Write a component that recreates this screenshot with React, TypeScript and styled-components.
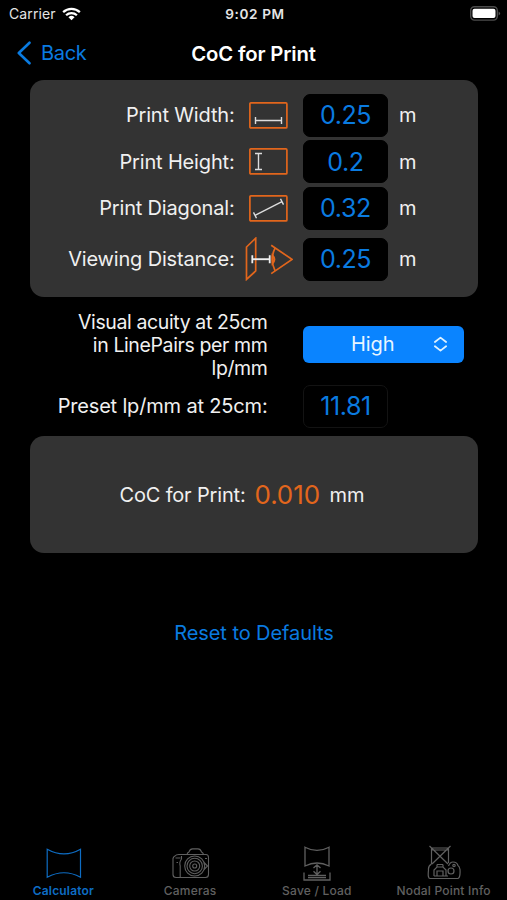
import React from 'react';
import styled, { createGlobalStyle } from 'styled-components';

const GlobalStyle = createGlobalStyle`
  * { box-sizing: border-box; }
  body { margin: 0; background: #000; }
  svg { display: block; flex: none; }
`;

const BLUE = '#0a7be0';
const ORANGE = '#e2661c';

const Screen = styled.main`
  width: 507px;
  height: 900px;
  display: flex;
  flex-direction: column;
  overflow: hidden;
  background: #000;
  color: #f0f0f0;
  font-family: Inter, 'Liberation Sans', sans-serif;
  font-size: 20px;
`;

const StatusBar = styled.header`
  height: 27px;
  display: grid;
  grid-template-columns: 1fr auto 1fr;
  align-items: center;
  padding: 0 6px 0 9px;
  font-size: 14px;
  color: #e4e4e4;
`;

const Carrier = styled.div`
  display: flex;
  align-items: center;
  gap: 6px;
  letter-spacing: 0.1px;
`;

const Clock = styled.div`
  font-weight: 600;
  font-size: 13.6px;
  letter-spacing: 0.6px;
`;

const BatterySlot = styled.div`
  justify-self: end;
`;

const NavBar = styled.nav`
  height: 52px;
  display: grid;
  grid-template-columns: 1fr auto 1fr;
  align-items: center;
  padding: 0 17px;
`;

const BackButton = styled.button`
  justify-self: start;
  display: flex;
  align-items: center;
  gap: 10px;
  padding: 0;
  border: 0;
  background: none;
  color: ${BLUE};
  font: inherit;
  font-size: 20px;
  letter-spacing: -0.3px;
`;

const Title = styled.h1`
  margin: 0;
  font-size: 20.3px;
  font-weight: 600;
  letter-spacing: -0.15px;
  color: #fff;
`;

const Card = styled.section`
  width: 448px;
  margin-left: 30px;
  border-radius: 14px;
  background: #333;
`;

const InputCard = styled(Card)`
  height: 217px;
  margin-top: 0.5px;
  padding-top: 12.6px;
`;

const FieldRow = styled.div<{ $height: number }>`
  height: ${(p) => p.$height}px;
  display: grid;
  grid-template-columns: 204.5px 68.5px 85px 1fr;
  align-items: center;
`;

const Label = styled.label`
  text-align: right;
  white-space: nowrap;
  letter-spacing: -0.17px;
`;

const IconSlot = styled.div`
  display: flex;
  justify-content: center;
`;

const ValueBox = styled.div<{ $outlined?: boolean }>`
  width: 85px;
  height: 43px;
  display: flex;
  align-items: center;
  justify-content: center;
  border-radius: 7px;
  border: 1px solid ${(p) => (p.$outlined ? '#131313' : '#000')};
  background: #000;
  color: ${BLUE};
  font-size: 25px;
  letter-spacing: -0.4px;
`;

const Unit = styled.span`
  padding-left: 11px;
`;

const PresetArea = styled.section`
  height: 139.5px;
  display: grid;
  grid-template-columns: 267.5px 162px;
  column-gap: 35.5px;
  grid-template-rows: 68px 43px;
  row-gap: 6px;
  padding-top: 14px;
`;

const AcuityLabel = styled.div`
  text-align: right;
  line-height: 23.2px;
  font-size: 19.5px;
  letter-spacing: -0.38px;
`;

const Picker = styled.button`
  width: 161px;
  height: 36.5px;
  margin-top: 15.5px;
  padding: 0 16px 0 48px;
  display: flex;
  align-items: center;
  justify-content: space-between;
  border: 0;
  border-radius: 6px;
  background: #0a84ff;
  color: #e8f6ff;
  font: inherit;
  font-size: 20px;
  letter-spacing: -0.1px;
`;

const PresetLabel = styled(Label)`
  align-self: center;
`;

const ResultCard = styled(Card)`
  height: 117px;
  display: flex;
  align-items: center;
  padding-left: 89.5px;
`;

const ResultValue = styled.output`
  margin: 0 9.5px 0 9px;
  color: ${ORANGE};
  font-size: 26px;
  letter-spacing: -0.1px;
`;

const ResetButton = styled.button`
  align-self: center;
  margin: 67px 0 0 1px;
  padding: 0;
  border: 0;
  background: none;
  color: ${BLUE};
  font: inherit;
  line-height: 26px;
  letter-spacing: -0.08px;
`;

const TabBar = styled.footer`
  height: 60px;
  margin-top: auto;
  display: grid;
  grid-template-columns: repeat(4, 1fr);
`;

const Tab = styled.button<{ $active?: boolean }>`
  display: flex;
  flex-direction: column;
  align-items: center;
  padding: 0;
  border: 0;
  background: none;
  color: ${(p) => (p.$active ? '#0e6dc4' : '#606060')};
  font: inherit;
  font-size: 12px;
  font-weight: ${(p) => (p.$active ? 600 : 500)};
  line-height: 16px;
  letter-spacing: 0.2px;
  white-space: nowrap;
`;

const TabIcon = styled.div<{ $lift: number }>`
  height: 43px;
  display: flex;
  align-items: flex-end;
  padding: 0 0 ${(p) => p.$lift}px 1px;
`;

const WifiIcon = () => (
  <svg width="19" height="14" viewBox="0 0 20 14" fill="none" stroke="#fff" strokeWidth="2.4">
    <path d="M1.2 5A13 13 0 0 1 18.8 5" />
    <path d="M4.3 8.3A8.3 8.3 0 0 1 15.7 8.3" />
    <path d="M10 13.5 6.8 10.4a4.6 4.6 0 0 1 6.4 0Z" fill="#fff" stroke="none" />
  </svg>
);

const BatteryIcon = () => (
  <svg width="31" height="15" viewBox="0 0 31 15">
    <rect x="0.7" y="0.7" width="26.6" height="13.4" rx="3.8" fill="none" stroke="#4c4c4c" strokeWidth="1.4" />
    <rect x="2.5" y="2.7" width="23" height="9.4" rx="2" fill="#fff" />
    <path d="M28.6 5.4q3 2 0 4.2Z" fill="#555" />
  </svg>
);

const ChevronLeft = () => (
  <svg width="14" height="24" viewBox="0 0 14 24" fill="none" stroke={BLUE} strokeWidth="2.6" strokeLinecap="round" strokeLinejoin="round">
    <path d="M12.5 1.7 1.8 12l10.7 10.3" />
  </svg>
);

const Frame = ({ children }: { children: React.ReactNode }) => (
  <svg width="39" height="27" viewBox="0 0 39 27" fill="none" stroke="#ddd" strokeWidth="1.4">
    <rect x="0.9" y="0.9" width="37" height="25" rx="1" stroke={ORANGE} strokeWidth="1.7" />
    {children}
  </svg>
);

const WidthIcon = () => (
  <Frame><path d="M6.5 18.5h26M6.5 15v7M32.5 15v7" /></Frame>
);
const HeightIcon = () => (
  <Frame><path d="M9.5 5.5v16M6 5.5h7M6 21.5h7" /></Frame>
);
const DiagonalIcon = () => (
  <Frame><path d="M6 20.3 33 6.7M4.5 17.4l3 5.8M31.5 3.8l3 5.8" /></Frame>
);
const ViewingIcon = () => (
  <svg width="48" height="44" viewBox="0 0 48 44" fill="none" stroke={ORANGE} strokeWidth="1.7">
    <path d="M1.5 10 10.7 1.2V34L1.5 42.4Z" />
    <path d="M26.2 8.2 47 22.4 26.2 36.6M30 11.2c-3.6 7.4-3.6 15 0 22.4" />
    <path d="M27.4 18.2q4.2 4.2 0 8.4Z" fill={ORANGE} fillOpacity="0.5" />
    <path d="M7.3 22.2h17.4" stroke="#eee" strokeWidth="1.9" />
    <path d="M7.3 18.2v8M24.7 18.2v8" stroke="#eee" strokeWidth="1.8" />
  </svg>
);

const UpDownIcon = () => (
  <svg width="15" height="16" viewBox="0 0 15 16" fill="none" stroke="#dff2ff" strokeWidth="1.8" strokeLinecap="round" strokeLinejoin="round">
    <path d="m1.9 6 5.6-4.4L13.1 6M1.9 10.3l5.6 4.3 5.6-4.3" />
  </svg>
);

const PanoramaIcon = () => (
  <svg width="36" height="31" viewBox="0 0 36 31" fill="none" stroke="currentColor" strokeWidth="1.2">
    <path d="M1.2 1.2C12 7.2 24 7.2 34.5 1.2V29.3C24 23.5 12 23.5 1.2 29.3Z" />
  </svg>
);

const CameraIcon = () => (
  <svg width="38" height="31" viewBox="0 0 38 31" fill="none" stroke="currentColor" strokeWidth="1.1">
    <path d="M15 6.5q.3-2 2-2.6 1-3 3.5-3h5.500q2.500 0 3.500 3 1.500.6 2 2.600H34q2.500 0 2.500 3v17q0 3-3 3H4q-3 0-3-3V10.500q.5-2 2-2.500 1-1.500 4-1.500Z" />
    <path d="M15 6.500h16M3.500 10h5M9.500 8v3q-2.500 3-1.300 7v11M4.500 14.500h1.500M33 10.500h2" />
    <circle cx="22.7" cy="18" r="10" />
    <circle cx="22.7" cy="18" r="7.700" />
    <circle cx="22.7" cy="18" r="5" />
    <circle cx="22.7" cy="18" r="2" />
    <path d="m32 14.500 3.500 3.500-3.500 3.500" />
  </svg>
);

const SaveLoadIcon = () => (
  <svg width="28" height="35" viewBox="0 0 28 35" fill="none" stroke="currentColor" strokeWidth="1.3">
    <path d="M2 1.2C10 5.5 18 5.5 26 1.2V20C18 16 10 16 2 20Z" />
    <path d="M14 19v9M10.5 22 14 18.8l3.5 3.2M10.5 25.3 14 28.5l3.5-3.2M1 26.5V34h26v-7.5M5 29.5h18M5 31.7h18" />
  </svg>
);

const NodalIcon = () => (
  <svg width="34" height="35" viewBox="0 0 34 35" fill="none" stroke="currentColor" strokeWidth="1.2">
    <path d="M2.5 1 21 19M23.5 1 5 19M4.5 3h17v15M4.5 3v16M4.500 5h17" />
    <path d="M4.5 19Q1 21 1.500 25 .5 33.500 3 33.500h28q2.500-1 2-9-.5-3-2-4-1-3.500-5-3.500-3 0-4.500 4" />
    <path d="M7 31v-6l3-3h6l3 3v6M10 31v-5h6v5M10 19.500v3M16 19.500v3M10 19.500h6M7 31h14" />
    <circle cx="24" cy="26" r="3" />
    <circle cx="27" cy="20.500" r="1.200" />
  </svg>
);

const fields = [
  { label: 'Print Width:', value: '0.25', icon: <WidthIcon />, height: 46.5 },
  { label: 'Print Height:', value: '0.2', icon: <HeightIcon />, height: 46.5 },
  { label: 'Print Diagonal:', value: '0.32', icon: <DiagonalIcon />, height: 46.5 },
  { label: 'Viewing Distance:', value: '0.25', icon: <ViewingIcon />, height: 55 },
];

const tabs = [
  { label: 'Calculator', icon: <PanoramaIcon />, lift: 4 },
  { label: 'Cameras', icon: <CameraIcon />, lift: 4 },
  { label: 'Save / Load', icon: <SaveLoadIcon />, lift: 2 },
  { label: 'Nodal Point Info', icon: <NodalIcon />, lift: 3 },
];

export default function App() {
  return (
    <>
      <GlobalStyle />
      <Screen>
        <StatusBar>
          <Carrier>Carrier <WifiIcon /></Carrier>
          <Clock>9:02 PM</Clock>
          <BatterySlot><BatteryIcon /></BatterySlot>
        </StatusBar>
        <NavBar>
          <BackButton><ChevronLeft />Back</BackButton>
          <Title>CoC for Print</Title>
        </NavBar>
        <InputCard>
          {fields.map((f) => (
            <FieldRow key={f.label} $height={f.height}>
              <Label>{f.label}</Label>
              <IconSlot>{f.icon}</IconSlot>
              <ValueBox>{f.value}</ValueBox>
              <Unit>m</Unit>
            </FieldRow>
          ))}
        </InputCard>
        <PresetArea>
          <AcuityLabel>Visual acuity at 25cm<br />in LinePairs per mm<br />lp/mm</AcuityLabel>
          <Picker>High<UpDownIcon /></Picker>
          <PresetLabel>Preset lp/mm at 25cm:</PresetLabel>
          <ValueBox $outlined>11.81</ValueBox>
        </PresetArea>
        <ResultCard>
          <Label>CoC for Print:</Label>
          <ResultValue>0.010</ResultValue>
          <span>mm</span>
        </ResultCard>
        <ResetButton>Reset to Defaults</ResetButton>
        <TabBar>
          {tabs.map((t, i) => (
            <Tab key={t.label} $active={i === 0}>
              <TabIcon $lift={t.lift}>{t.icon}</TabIcon>
              {t.label}
            </Tab>
          ))}
        </TabBar>
      </Screen>
    </>
  );
}
